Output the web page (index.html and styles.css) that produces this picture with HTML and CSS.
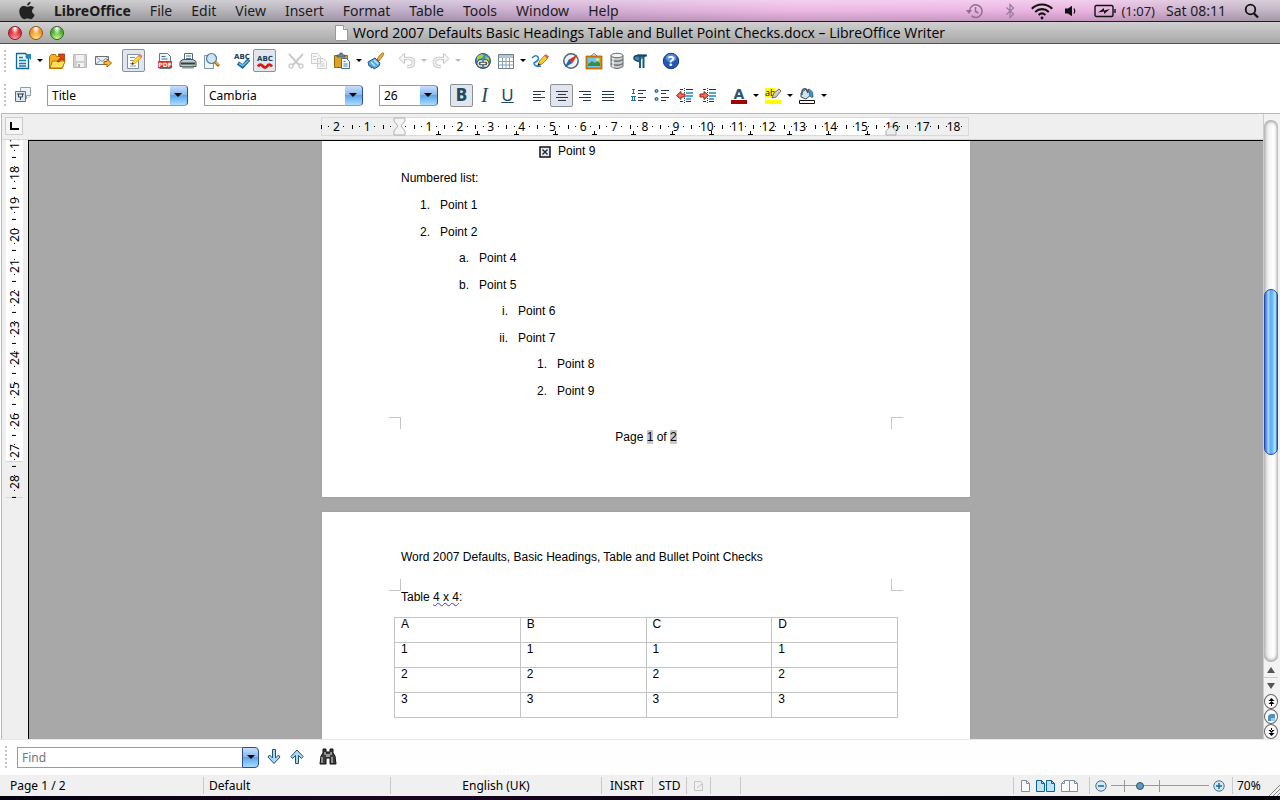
FILE: index.html
```html
<!DOCTYPE html>
<html lang="en-GB">
<head>
<meta charset="utf-8">
<title>Word 2007 Defaults Basic Headings Table and Bullet Point Checks.docx – LibreOffice Writer</title>
<link rel="stylesheet" href="styles.css">
</head>
<body>
<nav class="menubar" aria-label="Main menu">
  <button class="apple" aria-label="Apple menu"><svg width="17" height="20" viewBox="0 0 17 20"><path fill="#222" d="M12.6.8c.1 1.9-1.6 3.8-3.5 3.8C8.900 2.800 10.600 1 12.600.8zM9 5.700C10 5.700 11 4.900 12.700 4.900c1.300 0 2.600.7 3.400 1.900-3 1.700-2.500 5.700.6 6.900-.8 2.200-2.300 4.500-3.900 4.500-1.200 0-1.700-.7-3.200-.7s-2 .7-3.100.7C4 18.200 1.300 13.900 1.300 10.400 1.300 7 3.500 5 5.600 5 7.100 5 8.100 5.700 9 5.700z"/></svg></button>
  <button class="app">LibreOffice</button>
  <button>File</button><button>Edit</button><button>View</button><button>Insert</button><button>Format</button><button>Table</button><button>Tools</button><button>Window</button><button>Help</button>
  <div class="tray">
    <svg width="18" height="18" viewBox="0 0 18 18" fill="none" stroke="#8f6f90" stroke-width="1.500"><path d="M3.500 8.500a6.300 6.300 0 1 1 2 5.300M9.500 5v4.500l3 1.500"/><path fill="#8f6f90" stroke="none" d="M0 8h6l-3 4z"/></svg>
    <svg width="10" height="18" viewBox="0 0 10 18" fill="none" stroke="#9a7a9b" stroke-width="1.200"><path d="M1.500 5.500l7 6.500-3.500 3.500v-13l3.500 3.500-7 6.500"/></svg>
    <svg width="24" height="18" viewBox="0 0 24 18" fill="none" stroke="#111" stroke-width="2.100"><path d="M1.800 6.700c5.600-5.600 14.800-5.600 20.400 0M5.200 9.900c3.800-3.700 9.800-3.700 13.600 0M8.600 13c2-1.800 4.800-1.800 6.800 0"/><circle cx="12" cy="16" r="1.400" fill="#111" stroke="none"/></svg>
    <svg width="14" height="18" viewBox="0 0 14 18"><path fill="#111" d="M1 6.500h3L8 3.800v10.400l-4-2.700H1z"/><path d="M10 6.500q1.600 2.500 0 5" fill="none" stroke="#111" stroke-width="1.300"/></svg>
    <span class="battery"><svg width="22" height="18" viewBox="0 0 22 18" fill="none" stroke="#111" stroke-width="1.400"><rect x="1" y="3.500" width="18" height="11" rx="1.500"/><path d="M21 7v4"/><path fill="#111" stroke="none" d="M4 10.500 10 6v2.500l6-1.500-6 5V9.500z"/></svg><span class="time">(1:07)</span></span>
    <span class="clock">Sat 08:11</span>
    <svg width="16" height="18" viewBox="0 0 16 18" fill="none" stroke="#111"><circle cx="6.500" cy="7.500" r="4.800" stroke-width="1.800"/><path d="M10 11.500l4 4" stroke-width="2.300"/></svg>
  </div>
</nav>
<header class="titlebar">
  <div class="lights"><button class="light red" aria-label="Close"></button><button class="light amber" aria-label="Minimise"></button><button class="light green" aria-label="Zoom"></button></div>
  <h1><svg width="13" height="17" viewBox="0 0 13 17"><path d="M.5 1.500h8l4 4v11H.5z" fill="#fff" stroke="#999"/><path d="M8.500 1.500v4h4" fill="#ddd" stroke="#999"/></svg>Word 2007 Defaults Basic Headings Table and Bullet Point Checks.docx – LibreOffice Writer</h1>
</header>

<div class="toolbar standard" role="toolbar" aria-label="Standard">
  <div class="group">
    <button class="tool" aria-label="New"><svg viewBox="0 0 18 18"><path d="M2.500 1.500h9l3 3v12h-12z" fill="#edf6fb" stroke="#106a94" stroke-width="1.300"/><path d="M11 2h6v6l-2-2-2 1-2-2 1-1z" fill="#2585b5"/><path d="M5 5.500h4M5 8.500h7M5 11.500h7M5 14h7" stroke="#167baf" stroke-width="1.300"/></svg></button><button class="drop" aria-label="New options"></button>
    <button class="tool" aria-label="Open"><svg viewBox="0 0 18 18"><path d="M1.500 16V4.500l2-2h4l1 2h5V8H17l-3 8.500H1.500z" fill="#f3b21a" stroke="#b77300"/><path d="M4.500 9h12.500L14.500 16H2z" fill="#ffe05a" stroke="#b77300"/><path d="M9 9.500l3.500-4L10.500 3.500V2H16.500v6H15l-1-1.500L11 10z" fill="#e24416" stroke="#972200" stroke-width=".7"/></svg></button>
    <button class="tool" aria-label="Save" disabled><svg viewBox="0 0 18 18"><path d="M2.500 2.500h13v13h-13z" fill="#d0d0d0" stroke="#b8b8b8"/><path fill="#f2f2f2" d="M5 3h8v6H5zM6 11h7v4H6z"/><path fill="#b0b0b0" d="M7 12h2v3H7z"/></svg></button>
    <button class="tool" aria-label="Email"><svg viewBox="0 0 18 18"><path d="M1.500 4.500h13v8h-13z" fill="#e9eff4" stroke="#64717c"/><path d="M1.500 4.500l6.500 5 6.500-5M1.500 12.500l5-4" fill="none" stroke="#8a98a5"/><path d="M10 9.500h3v-2.500l4.500 4-4.500 4v-2.500h-3z" fill="#f5b936" stroke="#a66300"/></svg></button>
  </div>
  <div class="group"><button class="tool on" aria-label="Edit mode" aria-pressed="true"><svg viewBox="0 0 18 18"><path d="M2.500 2.500h11v14h-11z" fill="#fff" stroke="#7992a4"/><path d="M5 5.500h5M5 8.500h3M5 11.500h2M5 14h6" stroke="#7e98aa"/><path d="M7 12l1-3 6-6 2.500 2.500-6.500 6z" fill="#ffd52e" stroke="#b98010" stroke-width=".6"/><path d="M13 4l1.500-2.500 3 2.500-1.500 2z" fill="#ed7b8a"/><path d="M6.500 13l1-2.500 1.500 1.500z" fill="#222"/></svg></button></div>
  <div class="group">
    <button class="tool" aria-label="Export as PDF"><svg viewBox="0 0 18 18"><path d="M3.500 1.500h8l3 3v12h-11z" fill="#eef4f8" stroke="#61798b"/><path d="M5.500 4.500h4M5.500 7h6" stroke="#49687e"/><path fill="#e22816" d="M2 9h14v7H2z"/><text x="9" y="15" text-anchor="middle" class="pdf">PDF</text></svg></button>
    <button class="tool" aria-label="Print"><svg viewBox="0 0 18 18"><path d="M5.500 1.500h8v8h-8z" fill="#f4fbff" stroke="#526977"/><path d="M7 4h5M7 6.500h5" stroke="#579"/><path d="M1 9.500l3-2h10l3 2v5H1z" fill="#bfc8ca" stroke="#485257"/><path d="M2 11.500h14" stroke="#34424a" stroke-width="2"/><path d="M3 14.500h12v2H3z" fill="#8c989e"/><path d="M13 13h2" stroke="#57b838"/></svg></button>
    <button class="tool" aria-label="Page preview"><svg viewBox="0 0 18 18"><path d="M2.500 3.500h9v13h-9z" fill="#eef3f6" stroke="#8095a3"/><circle cx="9.500" cy="6.500" r="5" fill="#c9e5f7" stroke="#5b7a90" stroke-width="1.200"/><path d="M13 10l4 4" stroke="#a46700" stroke-width="3"/><path d="M13.500 10l3 3" stroke="#efb642" stroke-width="1.200"/></svg></button>
  </div>
  <div class="group">
    <button class="tool" aria-label="Spelling"><svg viewBox="0 0 18 18"><text x="9" y="7" text-anchor="middle" class="abc">ABC</text><path d="M5 11l4.500 3.500L16 7.500" fill="none" stroke="#126397" stroke-width="3.600"/><path d="M6 11.300l3.500 2.400 6-5.200" fill="none" stroke="#6bc0ef" stroke-width="1.600"/></svg></button>
    <button class="tool on" aria-label="AutoSpellcheck" aria-pressed="true"><svg viewBox="0 0 18 18"><text x="9" y="9" text-anchor="middle" class="abc">ABC</text><path d="M2 14.500q2-3.500 4.700-.5t4.600 0 4.700.5" fill="none" stroke="#d41b13" stroke-width="2.800"/></svg></button>
  </div>
  <div class="group">
    <button class="tool" aria-label="Cut" disabled><svg viewBox="0 0 18 18"><path d="M2 2l11 12M16 2L5 14" stroke="#cacaca" stroke-width="2"/><circle cx="4" cy="14" r="2" fill="none" stroke="#cfcfcf" stroke-width="1.500"/><circle cx="14" cy="14" r="2" fill="none" stroke="#cfcfcf" stroke-width="1.500"/></svg></button>
    <button class="tool" aria-label="Copy" disabled><svg viewBox="0 0 18 18" fill="#f7f7f7" stroke="#cecece"><path d="M1.500 1.500h6l3 3v7h-9zM7.500 6.500h6l3 3v7h-9z"/><path d="M3 4.500h3M3 7.500h3M9.500 9.500h3M9.500 12h5M9.500 14h5"/></svg></button>
    <button class="tool" aria-label="Paste"><svg viewBox="0 0 18 18"><path d="M1.500 3.500h13v12h-13z" fill="#dda21f" stroke="#9a6504"/><path d="M4 5V3h2l1-2h2l1 2h2v2z" fill="#718492" stroke="#41525e" stroke-width=".7"/><path d="M8.500 6.500h5l3 3v7h-8z" fill="#edf6fb" stroke="#426f8d"/><path d="M10.500 9.500h2M10.500 12h4M10.500 14h4" stroke="#5088aa"/></svg></button><button class="drop" aria-label="Paste options"></button>
    <button class="tool" aria-label="Clone formatting"><svg viewBox="0 0 18 18"><path d="M10 7l4-5q1-1.500 2.500-1 .8 1.500-.5 2.700L12 9z" fill="#eeb32a" stroke="#996007" stroke-width=".8"/><path d="M1 10l7-4 5 5-1 3-5 3-1-2-2 1 0-2-2 0z" fill="#59a9e1" stroke="#1f5b96"/><path d="M7 8l4 4M4 10l4 4" stroke="#d0edff" stroke-width="1.200"/></svg></button>
  </div>
  <div class="group">
    <button class="tool" aria-label="Undo" disabled><svg viewBox="0 0 18 18"><path d="M5 6.500h6q4.500 0 4.500 4t-4.500 4H9" fill="none" stroke="#c9c9c9" stroke-width="3.600"/><path d="M1 6.500l5.500-5v10z" fill="#f4f4f4" stroke="#c4c4c4"/><path d="M5 6.500h6q4.500 0 4.500 4t-4.500 4H9" fill="none" stroke="#f4f4f4" stroke-width="1.600"/></svg></button><button class="drop" disabled aria-label="Undo history"></button>
    <button class="tool" aria-label="Redo" disabled><svg viewBox="0 0 18 18"><path d="M13 6.500H7q-4.500 0-4.500 4t4.500 4h2" fill="none" stroke="#c9c9c9" stroke-width="3.600"/><path d="M17 6.500l-5.500-5v10z" fill="#f4f4f4" stroke="#c4c4c4"/><path d="M13 6.500H7q-4.500 0-4.500 4t4.500 4h2" fill="none" stroke="#f4f4f4" stroke-width="1.600"/></svg></button><button class="drop" disabled aria-label="Redo history"></button>
  </div>
  <div class="group">
    <button class="tool" aria-label="Hyperlink"><svg viewBox="0 0 18 18"><circle cx="9" cy="9" r="7.500" fill="#408bbd" stroke="#23577e"/><path d="M3 5q3-4 7-2l-2 3-3 1-2 3zM11 4l4 2v5l-3-3z" fill="#a5cf36"/><path d="M8 9H5.500q-3 2.500 0 5H8M10 9h2.500q3 2.500 0 5H10M6.500 11.500h5" fill="none" stroke="#444" stroke-width="3"/><path d="M8 9H5.500q-3 2.500 0 5H8M10 9h2.500q3 2.500 0 5H10M6.500 11.500h5" fill="none" stroke="#f5f7e8" stroke-width="1.300"/></svg></button>
    <button class="tool" aria-label="Table"><svg viewBox="0 0 18 18"><path d="M1.500 2.500h15v14h-15z" fill="#fff" stroke="#687f91"/><path d="M1.500 9.500h15M1.500 13h15M5.500 2.500v14M9 2.500v14M12.500 2.500v14" stroke="#8ba0b0"/><path d="M2 4.500h14" stroke="#b4c4d0" stroke-width="3"/></svg></button><button class="drop" aria-label="Table size"></button>
    <button class="tool" aria-label="Show draw functions"><svg viewBox="0 0 18 18"><path d="M1 6q4-4 6-1t-4 6q0 4 7 3" fill="none" stroke="#2583ca" stroke-width="1.600"/><path d="M7 13l1.500-4L14 3l3 3-6 6z" fill="#ffce2a" stroke="#a36307" stroke-width=".8"/><path d="M13.500 4L15 2l3 2.500L16.500 7z" fill="#df6268"/><path d="M6.500 14l1-3 2 1.800z" fill="#222"/></svg></button>
  </div>
  <div class="group">
    <button class="tool" aria-label="Navigator"><svg viewBox="0 0 18 18"><circle cx="9" cy="9" r="7.200" fill="#e9f5fc" stroke="#54626d" stroke-width="1.500"/><path d="M15.500 2.500L10.500 11 7 7.500z" fill="#e02c16"/><path d="M2.500 15.500L7 7l3.500 4z" fill="#2764b2"/></svg></button>
    <button class="tool" aria-label="Gallery"><svg viewBox="0 0 18 18"><path d="M5 5l4-3.500L13 5" fill="none" stroke="#777"/><path d="M2 5h14v11H2z" fill="#74c4ed" stroke="#d98a10" stroke-width="2"/><path d="M1 4h16v13H1z" fill="none" stroke="#8e5100" stroke-width=".7"/><path d="M3 14v-2l4-3 3 2 2-2 3 2v3z" fill="#329248"/><circle cx="12.500" cy="7.500" r="1.500" fill="#ffe66e"/></svg></button>
    <button class="tool" aria-label="Data sources"><svg viewBox="0 0 18 18"><path d="M3 3.500v11q6 4 12 0v-11z" fill="#c8cdd0" stroke="#626b70"/><ellipse cx="9" cy="3.500" rx="6" ry="2.200" fill="#f2f4f5" stroke="#626b70"/><path d="M3 7.500q6 3.500 12 0M3 11.500q6 3.500 12 0" fill="none" stroke="#656f74" stroke-width="1.300"/><path d="M5 6v9.500" stroke="#fff" stroke-width="1.200"/></svg></button>
    <button class="tool" aria-label="Nonprinting characters"><svg viewBox="0 0 18 18"><path d="M15 3.500H7q-4 0-4 2.500t5 3.500" fill="#4389ad" stroke="#15466a" stroke-width="1.500"/><path d="M9 4v12M12.500 4v12" stroke="#1d5a80" stroke-width="2"/><path d="M6 3.500h10" stroke="#15466a" stroke-width="2"/></svg></button>
  </div>
  <div class="group"><button class="tool" aria-label="Help"><svg viewBox="0 0 18 18"><circle cx="9" cy="9" r="7.700" fill="#2557b3" stroke="#17387d"/><ellipse cx="9" cy="6" rx="5.500" ry="4" fill="#5b8bdb"/><text x="9" y="14" text-anchor="middle" class="q">?</text></svg></button></div>
</div>

<div class="toolbar formatting" role="toolbar" aria-label="Formatting">
  <div class="group"><button class="tool" aria-label="Styles and formatting"><svg viewBox="0 0 18 18"><path d="M6.500 1.500h10v8l-4 3h-6z" fill="#edf2f7" stroke="#8d9dac"/><path d="M12.500 12.500v-3h4" fill="#fff" stroke="#8d9dac"/><path d="M1.500 5.500h10v10h-10z" fill="#dfe6ec" stroke="#5d7181"/><path d="M4.500 8h4v3h-4zM6.500 11v3M4 7v2M9 7v2" fill="none" stroke="#2e4656"/></svg></button></div>
  <span class="combo style"><select aria-label="Paragraph style"><option>Title</option></select></span>
  <span class="combo font"><select aria-label="Font name"><option>Cambria</option></select></span>
  <span class="combo size"><select aria-label="Font size"><option>26</option></select></span>
  <div class="group">
    <button class="tool on letter" aria-pressed="true" aria-label="Bold"><b>B</b></button>
    <button class="tool letter" aria-label="Italic"><i>I</i></button>
    <button class="tool letter" aria-label="Underline"><u>U</u></button>
  </div>
  <div class="group">
    <button class="tool" aria-label="Align left"><svg viewBox="0 0 18 18" stroke="#27394a"><path d="M3 5.500h12M3 8.500h8M3 11.500h12M3 14.500h8"/></svg></button>
    <button class="tool on" aria-label="Centre" aria-pressed="true"><svg viewBox="0 0 18 18" stroke="#27394a"><path d="M3 5.500h12M5 8.500h8M3 11.500h12M5 14.500h8"/></svg></button>
    <button class="tool" aria-label="Align right"><svg viewBox="0 0 18 18" stroke="#27394a"><path d="M3 5.500h12M7 8.500h8M3 11.500h12M7 14.500h8"/></svg></button>
    <button class="tool" aria-label="Justify"><svg viewBox="0 0 18 18" stroke="#27394a"><path d="M3 5.500h12M3 8.500h12M3 11.500h12M3 14.500h12"/></svg></button>
  </div>
  <div class="group">
    <button class="tool" aria-label="Numbering"><svg viewBox="0 0 18 18" fill="none" stroke="#263849"><path d="M8 4.500h8M8 7.500h5M8 11.500h8M8 14.500h5"/><path d="M2 3.500h3M2 7.500h3M3.500 4v4M1 10.500h5M1 14.500h5M2.500 11v4M4.500 11v4" stroke="#267499"/></svg></button>
    <button class="tool" aria-label="Bullets"><svg viewBox="0 0 18 18" fill="none" stroke="#263849"><path d="M8 4.500h8M8 7.500h5M8 11.500h8M8 14.500h5"/><circle cx="3.500" cy="5" r="1.500" fill="#7bbbe0" stroke="#164e75"/><circle cx="3.500" cy="13" r="1.500" fill="#7bbbe0" stroke="#164e75"/></svg></button>
    <button class="tool" aria-label="Decrease indent"><svg viewBox="0 0 18 18"><path d="M4 3.500h3M10 3.500h7M4 15.500h3M10 15.500h5" stroke="#234"/><path d="M10 7h7M10 10h7M10 13h5" stroke="#1986c6" stroke-width="1.600"/><path d="M.5 9.500L5 5.500V8h4v3H5v2.500z" fill="#ee7058" stroke="#a41c10"/><path d="M8.500 2v5M8.500 12v5" stroke="#345" stroke-dasharray="1 1"/></svg></button>
    <button class="tool" aria-label="Increase indent"><svg viewBox="0 0 18 18"><path d="M4 3.500h3M10 3.500h7M4 15.500h3M10 15.500h5" stroke="#234"/><path d="M10 7h7M10 10h7M10 13h5" stroke="#1986c6" stroke-width="1.600"/><path d="M9.500 9.500L5 5.500V8H1v3h4v2.500z" fill="#ee7058" stroke="#a41c10"/><path d="M8.500 2v5M8.500 12v5" stroke="#345" stroke-dasharray="1 1"/></svg></button>
  </div>
  <div class="group">
    <button class="tool" aria-label="Font colour"><svg viewBox="0 0 18 18"><text x="9" y="13" text-anchor="middle" class="fc">A</text><path fill="#a00000" d="M1 14h16v4H1z"/></svg></button><button class="drop" aria-label="Font colours"></button>
    <button class="tool" aria-label="Highlighting"><svg viewBox="0 0 18 18"><path fill="#ff0" d="M1 2h10v10H1zM1 14h16v4H1z"/><text x="1" y="10" class="hl">ab</text><path d="M8 12l2-5 5-4 2 2-5 6z" fill="#d6d1bf" stroke="#6e6b61"/></svg></button><button class="drop" aria-label="Highlight colours"></button>
    <button class="tool" aria-label="Background colour"><svg viewBox="0 0 18 18"><path d="M3 7l5-4 6 5-6 5-5-2z" fill="#d5e0e7" stroke="#354b5a"/><path d="M4 9V5q1-3 4-2l2 4" fill="none" stroke="#384f60" stroke-width="1.300"/><path d="M10 3q5.500 1 5 8-2 1-3-1z" fill="#3b96c9" stroke="#1f5577" stroke-width=".7"/><path d="M1.500 14.500h15v3h-15z" fill="#fff" stroke="#111"/></svg></button><button class="drop" aria-label="Background colours"></button>
  </div>
</div>

<main class="workspace">
  <div class="hruler">
    <button class="tabstop" aria-label="Tab type"></button>
    <div class="hscale">
      <div class="cells"><span>2</span><span>1</span><span></span><span>1</span><span>2</span><span>3</span><span>4</span><span>5</span><span>6</span><span>7</span><span>8</span><span>9</span><span>10</span><span>11</span><span>12</span><span>13</span><span>14</span><span>15</span><span>16</span><span>17</span><span>18</span></div>
      <svg class="marks" viewBox="0 0 648 19" width="648" height="19"><path d="M73 1h11v3l-4 5 4 5v4H73v-4l4-5-4-5z" fill="#f4f4f4" stroke="#b0b0b0"/><path d="M565 18v-4l5-5 5 5v4z" fill="#eee" stroke="#b0b0b0"/><path d="M117 14v4M156 14v4M195 14v4M234 14v4M273 14v4M312 14v4M351 14v4M390 14v4M429 14v4M468 14v4M507 14v4M546 14v4" transform="translate(.5 0)" stroke="#000"/><path d="M115 17.500h434" stroke="#000" stroke-dasharray="5 34"/></svg>
    </div>
  </div>
  <div class="vruler"><div class="vcells"><span>17</span><span>18</span><span>19</span><span>20</span><span>21</span><span>22</span><span>23</span><span>24</span><span>25</span><span>26</span><span>27</span><span>28</span></div></div>
  <div class="canvas">
    <article class="page first">
      <div class="bullet"><svg width="12" height="12" viewBox="0 0 12 12"><path d="M1 1h10v10H1z" fill="#e4edf5" stroke="#111" stroke-width="1.500"/><path d="M3.500 3.500l5 5M8.500 3.500l-5 5" stroke="#223" stroke-width="1.400"/></svg>Point 9</div>
      <p>Numbered list:</p>
      <ol>
        <li><span class="num">1.</span>Point 1</li>
        <li><span class="num">2.</span>Point 2
          <ol>
            <li><span class="num">a.</span>Point 4</li>
            <li><span class="num">b.</span>Point 5
              <ol>
                <li><span class="num">i.</span>Point 6</li>
                <li><span class="num">ii.</span>Point 7
                  <ol><li><span class="num">1.</span>Point 8</li><li><span class="num">2.</span>Point 9</li></ol>
                </li>
              </ol>
            </li>
          </ol>
        </li>
      </ol>
      <div class="corners bottom"><span></span><span></span></div>
      <footer>Page <mark>1</mark> of <mark>2</mark></footer>
    </article>
    <article class="page second">
      <p class="heading">Word 2007 Defaults, Basic Headings, Table and Bullet Point Checks</p>
      <div class="corners top"><span></span><span></span></div>
      <p class="caption">Table <span class="wavy">4 x 4</span>:</p>
      <table>
        <tr><td>A</td><td>B</td><td>C</td><td>D</td></tr>
        <tr><td>1</td><td>1</td><td>1</td><td>1</td></tr>
        <tr><td>2</td><td>2</td><td>2</td><td>2</td></tr>
        <tr><td>3</td><td>3</td><td>3</td><td>3</td></tr>
      </table>
    </article>
  </div>
  <div class="scroll">
    <div class="track"><div class="thumb"></div></div>
    <button class="arrow" aria-label="Scroll up"><svg width="8" height="6"><path d="M4 0l4 6H0z" fill="#555"/></svg></button>
    <button class="arrow" aria-label="Scroll down"><svg width="8" height="6"><path d="M4 6l4-6H0z" fill="#555"/></svg></button>
    <button class="round" aria-label="Previous page"><svg width="7" height="8"><path d="M3.500 0L6.500 3h-6zM3.500 3L6.500 6h-6zM3 5h1v3H3z"/></svg></button>
    <button class="round" aria-label="Navigation"><svg width="8" height="8"><path d="M1 8V3l2-2h5v7z" fill="#4b94bd"/><path d="M4 5h4v3H4z" fill="#9cc9e0"/></svg></button>
    <button class="round" aria-label="Next page"><svg width="7" height="8"><path d="M3.500 8L6.500 5h-6zM3.500 5L6.500 2h-6zM3 0h1v3H3z"/></svg></button>
  </div>
</main>

<form class="findbar">
  <span class="find"><input type="text" placeholder="Find" aria-label="Find"><button type="button" aria-label="Search history"></button></span>
  <button type="button" class="tool" aria-label="Find next"><svg viewBox="0 0 18 18"><path d="M7.500 1.500h3v8.500l3-3 1.500 2L9 15.500 3 9l1.500-2 3 3z" fill="#acd9f2" stroke="#20536f"/></svg></button>
  <button type="button" class="tool" aria-label="Find previous"><svg viewBox="0 0 18 18"><path d="M7.500 15.500h3V7.500l3 3 1.500-2L9 2 3 8.500l1.500 2 3-3z" fill="#acd9f2" stroke="#20536f"/></svg></button>
  <button type="button" class="tool binoc" aria-label="Find and replace"><svg viewBox="0 0 18 18"><path d="M4 1h3v3h4V1h3v4l2 3 1 8h-6v-6H7v6H1l1-8 2-3z" fill="#3c3c3c" stroke="#111"/><path d="M3 9v6M13 9v6M6 4v3M12 4v3" stroke="#bbb" stroke-width="1.300"/><path d="M7 6h4v3H7z" fill="#999"/></svg></button>
</form>

<footer class="status">
  <span class="cell pageno">Page 1 / 2</span><span class="cell pstyle">Default</span><span class="cell lang">English (UK)</span><span class="cell insrt">INSRT</span><span class="cell std">STD</span>
  <span class="cell modified"><svg width="11" height="12" viewBox="0 0 11 12"><path d="M1.500 1.500h6l2 2v7h-8zM4 8l5-4" fill="none" stroke="#c4c4c4"/></svg></span><span class="cell sig"></span><span class="cell space"></span>
  <span class="cell views">
    <button aria-label="Single page"><svg width="9" height="12" viewBox="0 0 9 12"><path d="M.5.5h5l3 3v8h-8z" fill="#fafcff" stroke="#8090a0"/><path d="M5.500.5v3h3" fill="none" stroke="#8090a0"/></svg></button>
    <button aria-label="Multiple pages"><svg width="19" height="12" viewBox="0 0 19 12"><path d="M.5.5h5l3 3v8h-8zM10.500.5h5l3 3v8h-8z" fill="#c3e2f6" stroke="#0762a0"/><path d="M5.500.5v3h3M15.500.5v3h3" fill="none" stroke="#0762a0"/></svg></button>
    <button aria-label="Book view"><svg width="17" height="12" viewBox="0 0 17 12"><path d="M3.500.5h5v11h-8v-8zM8.500.5h5l3 3v8h-8z" fill="#fafcff" stroke="#8090a0"/><path d="M3.500.5v3h-3M13.500.5v3h3" fill="none" stroke="#8090a0"/></svg></button>
  </span>
  <span class="cell zoom">
    <button aria-label="Zoom out"><svg width="12" height="12" viewBox="0 0 12 12"><circle cx="6" cy="6" r="5.200" fill="#d1e9f8" stroke="#566978"/><path d="M3 6h6" stroke="#096da5" stroke-width="1.500"/></svg></button>
    <input type="range" min="0" max="100" value="28" aria-label="Zoom">
    <button aria-label="Zoom in"><svg width="12" height="12" viewBox="0 0 12 12"><circle cx="6" cy="6" r="5.200" fill="#d1e9f8" stroke="#566978"/><path d="M3 6h6M6 3v6" stroke="#096da5" stroke-width="1.500"/></svg></button>
  </span>
  <span class="percent">70%</span>
  <svg class="grip" width="11" height="12" viewBox="0 0 11 12"><path d="M0 12L11 1M4 12l7-7M8 12l3-3" stroke="#888"/></svg>
</footer>
<div class="desktop"></div>
</body>
</html>
```
FILE: styles.css
```css
* { box-sizing: border-box; }
body { margin: 0; height: 100vh; overflow: hidden; display: flex; flex-direction: column; background: #fff; color: #000; font: 12px/16px "Noto Sans", "Open Sans", sans-serif; }
button { appearance: none; border: 0; padding: 0; margin: 0; background: none; font: inherit; color: inherit; }
svg { display: block; flex: none; }
p, h1, ol { margin: 0; padding: 0; }
ol { list-style: none; }

.menubar { flex: none; height: 22px; display: flex; align-items: center; gap: 19px; padding: 0 20px 0 18px; border-bottom: 1px solid #2a1530; color: #1c1c1c; font-size: 14px; line-height: 20px;
  background: linear-gradient(rgba(255,255,255,.35), rgba(255,255,255,0) 50%, rgba(0,0,0,.16)), linear-gradient(90deg, #b4b4b4, #b8b4bc 20%, #c0aecb 32%, #d5aed5 48%, #ecb8e4 62%, #eab4e2 85%, #c9b0c9 94%, #c2b6c4); }
.app { font-weight: 700; }
.tray { margin-left: auto; display: flex; align-items: center; gap: 19px; }
.tray > svg:nth-child(1) { margin-right: 2px; }
.tray > svg:nth-child(2) { margin-right: -4px; }
.tray > svg:nth-child(3) { margin-right: -9px; }
.tray > svg:nth-child(4) { margin-right: -3px; }
.battery { display: flex; align-items: center; gap: 5px; }
.time { font-size: 13px; }
.clock { margin: 0 -1px 0 -8px; }

.titlebar { flex: none; height: 22px; display: flex; align-items: center; padding: 0 8px; border-bottom: 1px solid #515151; background: linear-gradient(#d0d0d0, #a8a8a8); }
.lights { width: 56px; display: flex; gap: 7px; }
.light { width: 14px; height: 14px; border-radius: 50%; border: 1px solid #555; }
.red { background: radial-gradient(circle at 50% 100%, #ffb0a8, transparent 55%), radial-gradient(ellipse at 50% 10%, #fff 5%, #e0303b 45%); border-color: #8a1a22; }
.amber { background: radial-gradient(circle at 50% 100%, #fff08a, transparent 60%), radial-gradient(ellipse at 50% 10%, #fff 5%, #f0922b 45%); border-color: #985017; }
.green { background: radial-gradient(circle at 50% 100%, #d8ff90, transparent 60%), radial-gradient(ellipse at 50% 10%, #fff 5%, #4fae34 45%); border-color: #2e6420; }
h1 { flex: 1; margin-right: 56px; display: flex; justify-content: center; align-items: center; gap: 5px; font: 400 14px/20px "Open Sans", sans-serif; }

.toolbar { flex: none; display: flex; align-items: center; padding-left: 4px; }
.standard { height: 33px; }
.formatting { height: 36px; }
.toolbar::before, .findbar::before { content: ""; flex: none; width: 2px; height: 22px; margin-right: 5px; background: repeating-linear-gradient(#c4c4c4 0 2px, transparent 2px 4px); }
.group { display: flex; margin-right: 8px; }
.tool { flex: none; width: 23px; height: 23px; display: flex; align-items: center; justify-content: center; }
.tool svg { width: 18px; height: 18px; }
.on { border: 1px solid #8a919c; border-radius: 2px; background: #e2e5eb; }
.drop { width: 11px; display: flex; align-items: center; justify-content: center; }
.drop::before, .combo::after, .find button::before { content: ""; border: 3px solid transparent; border-top-color: #000; border-bottom: 0; }
.drop:disabled::before { border-top-color: #bbb; }
.abc { font: bold 7px "DejaVu Sans", sans-serif; fill: #183e58; }
.pdf { font: bold 6px "DejaVu Sans", sans-serif; fill: #fff; }
.q { font: bold 14px "Noto Sans", sans-serif; fill: #fff; }
.fc { font: bold 14px "DejaVu Sans", sans-serif; fill: #2d5873; }
.hl { font: 9px "Noto Sans", sans-serif; fill: #222; }
.letter { color: #24495e; font: 17px/20px "Noto Sans", sans-serif; }
.letter b { font-weight: 800; }
.letter i { font-family: "Liberation Serif", serif; font-size: 20px; }

.combo { height: 21px; display: grid; grid-template-columns: 1fr 18px; border: 1px solid #9a9a9a; border-right-color: #2c4b9c; border-radius: 0 4px 4px 0; background: linear-gradient(#c9e0fa, #87b9ef 45%, #5ea4ea 50%, #a9dcff) right / 17px 100% no-repeat; }
.combo.style { width: 141px; margin: 0 16px 0 5px; }
.combo.font { width: 159px; margin-right: 16px; }
.combo.size { width: 59px; margin-right: 12px; }
.combo select { grid-area: 1 / 1 / 2 / 3; min-width: 0; appearance: none; border: 0; background: none; padding: 0 0 0 4px; font: 12px "Noto Sans", sans-serif; color: #000; }
.combo::after { grid-area: 1 / 2; align-self: center; justify-self: center; z-index: 1; pointer-events: none; border-width: 4px 4px 0; }

.workspace { flex: 1; min-height: 0; display: grid; grid-template: 26px minmax(0, 1fr) / 26px minmax(0, 1fr) 17px; margin-left: 1px; border-top: 1px solid #b8b8b8; border-left: 1px solid #b8b8b8; background: #efefef; }
.hruler { grid-column: 1 / 3; display: grid; grid-template-columns: 25px minmax(0, 1fr); border-bottom: 1px solid #d5d5d5; }
.tabstop { margin: 3px 4px 4px 3px; border: 1px solid #ccc; background: #f4f4f4; display: flex; align-items: center; justify-content: center; }
.tabstop::before { content: ""; width: 7px; height: 6px; border-left: 2px solid #000; border-bottom: 2px solid #000; }
.hscale { justify-self: center; align-self: start; margin-top: 3px; width: 648px; max-width: 100%; display: grid; height: 19px; overflow: hidden; background: linear-gradient(90deg, #efefef 78px, #fff 78px 569px, #efefef 569px); box-shadow: inset 0 0 0 1px #dadada; }
.hscale > * { grid-area: 1 / 1; }
.cells { display: flex; align-items: stretch; }
.cells span { flex: 1 1 0; min-width: 0; text-align: center; line-height: 19px; font-size: 12px; white-space: nowrap;
  background: linear-gradient(#000, #000) 0 50% / 1px 4px no-repeat, linear-gradient(#000, #000) 25% 50% / 1px 1px no-repeat, linear-gradient(#000, #000) 75% 50% / 1px 1px no-repeat; }
.vruler { margin: 0 5px 0 4px; overflow: hidden; height: 358px; display: flex; flex-direction: column; justify-content: flex-end; background: linear-gradient(0deg, #d5d5d5 1px, #efefef 1px 36px, #d5d5d5 36px 37px, #fff 37px); }
.vcells { flex: none; height: 371px; display: flex; flex-direction: column; }
.vcells span { flex: 1 1 0; display: flex; align-items: center; justify-content: center; writing-mode: vertical-rl; transform: rotate(180deg); font-size: 12px;
  background: linear-gradient(#000, #000) 50% 0 / 4px 1px no-repeat, linear-gradient(#000, #000) 50% 25% / 1px 1px no-repeat, linear-gradient(#000, #000) 50% 75% / 1px 1px no-repeat; }

.canvas { overflow: hidden; display: flex; flex-direction: column; align-items: center; gap: 15px; background: #a8a8a8; border-top: 1px solid #000; border-left: 1px solid #000; font: 12px/27px "Liberation Sans", Arial, sans-serif; }
.page { flex: none; width: 648px; max-width: 100%; padding: 0 79px; background: #fff; box-shadow: 0 0 2px #999; }
.first { height: 356px; overflow: hidden; }
.bullet { margin-top: -3px; padding-left: 138px; display: flex; align-items: center; gap: 7px; }
li { padding-left: 39px; }
ol ol { margin-top: -1px; }
.num { display: inline-block; width: 20px; margin: 0 10px 0 -30px; text-align: right; }
.corners { display: flex; justify-content: space-between; margin: 0 -12px; }
.corners span { width: 12px; height: 12px; border: 0 solid #c4c4c4; }
.corners span:first-child { border-right-width: 1px; }
.corners span:last-child { border-left-width: 1px; }
.bottom { margin-top: 12px; }
.bottom span { border-top-width: 1px; }
.top span { border-bottom-width: 1px; }
.first footer { line-height: 16px; text-align: center; }
mark { background: #c8c8c8; color: inherit; }
.second { min-height: 240px; padding-top: 32px; }
.heading { margin-bottom: 8px; }
.caption { line-height: 12px; margin-bottom: 14px; }
.wavy { text-decoration: underline wavy #4436e0 1px; text-underline-offset: 1px; }
table { width: 504px; margin-left: -7px; border-collapse: collapse; table-layout: fixed; }
td { height: 25px; padding: 0 6px; border: 1px solid #c4c4c4; vertical-align: top; line-height: 12px; }

.scroll { grid-area: 1 / 3 / 3 / 4; display: flex; flex-direction: column; align-items: center; background: #f2f2f2; padding: 6px 2px 0 0; border-left: 1px solid #ccc; }
.track { flex: 1; width: 14px; min-height: 0; border-radius: 7px; background: linear-gradient(90deg, #cfcfcf, #f4f4f4 35%, #fff 70%, #ddd); box-shadow: inset 0 2px 3px #aaa, inset 0 -2px 3px #aaa; }
.thumb { width: 14px; height: 166px; margin: 169px auto 0; border-radius: 7px; border: 1px solid #2448a8; background: linear-gradient(90deg, #2d6fe0, #a4d4fb 28%, #5ea9f1 48%, #70c2ff 65%, #b6eeff 85%, #3c68b0); }
.arrow { width: 14px; height: 16px; display: flex; align-items: center; justify-content: center; border-bottom: 1px solid #ccc; }
.arrow + .arrow { border-bottom: 0; }
.round { width: 14px; height: 15px; border: 1px solid #666; border-radius: 50%; background: #fafafa; display: flex; align-items: center; justify-content: center; }

.findbar { flex: none; height: 36px; display: flex; align-items: center; padding: 0 0 1px 5px; border-top: 1px solid #e8e8e8; background: #fefefe; }
.find { width: 242px; height: 21px; display: flex; margin: 0 3px 0 5px; }
.find input { flex: 1; min-width: 0; border: 1px solid #9a9a9a; border-right: 0; padding: 0 4px; font: 12px "Noto Sans", sans-serif; background: #fff; }
.find input::placeholder { color: #757575; }
.find button { width: 17px; border: 1px solid #2c4b9c; border-radius: 0 4px 4px 0; background: linear-gradient(#c9e0fa, #87b9ef 45%, #5ea4ea 50%, #a9dcff); display: flex; align-items: center; justify-content: center; }
.find button::before { border-width: 4px 4px 0; }
.binoc { margin-left: 8px; }

.status { flex: none; height: 21px; display: flex; align-items: center; background: #f0f0f0; font-size: 12px; }
.cell { height: 17px; display: flex; align-items: center; border-right: 1px solid #c9c9c9; }
.pageno { width: 204px; padding-left: 10px; }
.pstyle { width: 187px; padding-left: 5px; }
.lang { width: 211px; justify-content: center; }
.insrt { width: 51px; justify-content: center; }
.std { width: 34px; justify-content: center; }
.modified { width: 24px; justify-content: center; }
.sig { width: 30px; }
.space { flex: 1; }
.views { width: 76px; gap: 6px; padding-left: 7px; }
.zoom { width: 143px; gap: 4px; padding-left: 5px; }
.zoom input { appearance: none; width: 98px; height: 12px; margin: 0; background: linear-gradient(#999, #999) 0 50% / 100% 1px no-repeat, linear-gradient(#999, #999) 13px 0 / 1px 12px no-repeat, linear-gradient(#999, #999) 48px 0 / 1px 12px no-repeat; }
.zoom input::-webkit-slider-thumb { appearance: none; width: 8px; height: 8px; border-radius: 50%; border: 1px solid #34536a; background: #5c9ac0; }
.percent { width: 29px; margin-left: 4px; }
.grip { align-self: flex-end; margin-left: 3px; }
.desktop { flex: none; height: 4px; background: linear-gradient(90deg, #03020e, #1a0420 30%, #05030e 70%, #02020a); }
```
